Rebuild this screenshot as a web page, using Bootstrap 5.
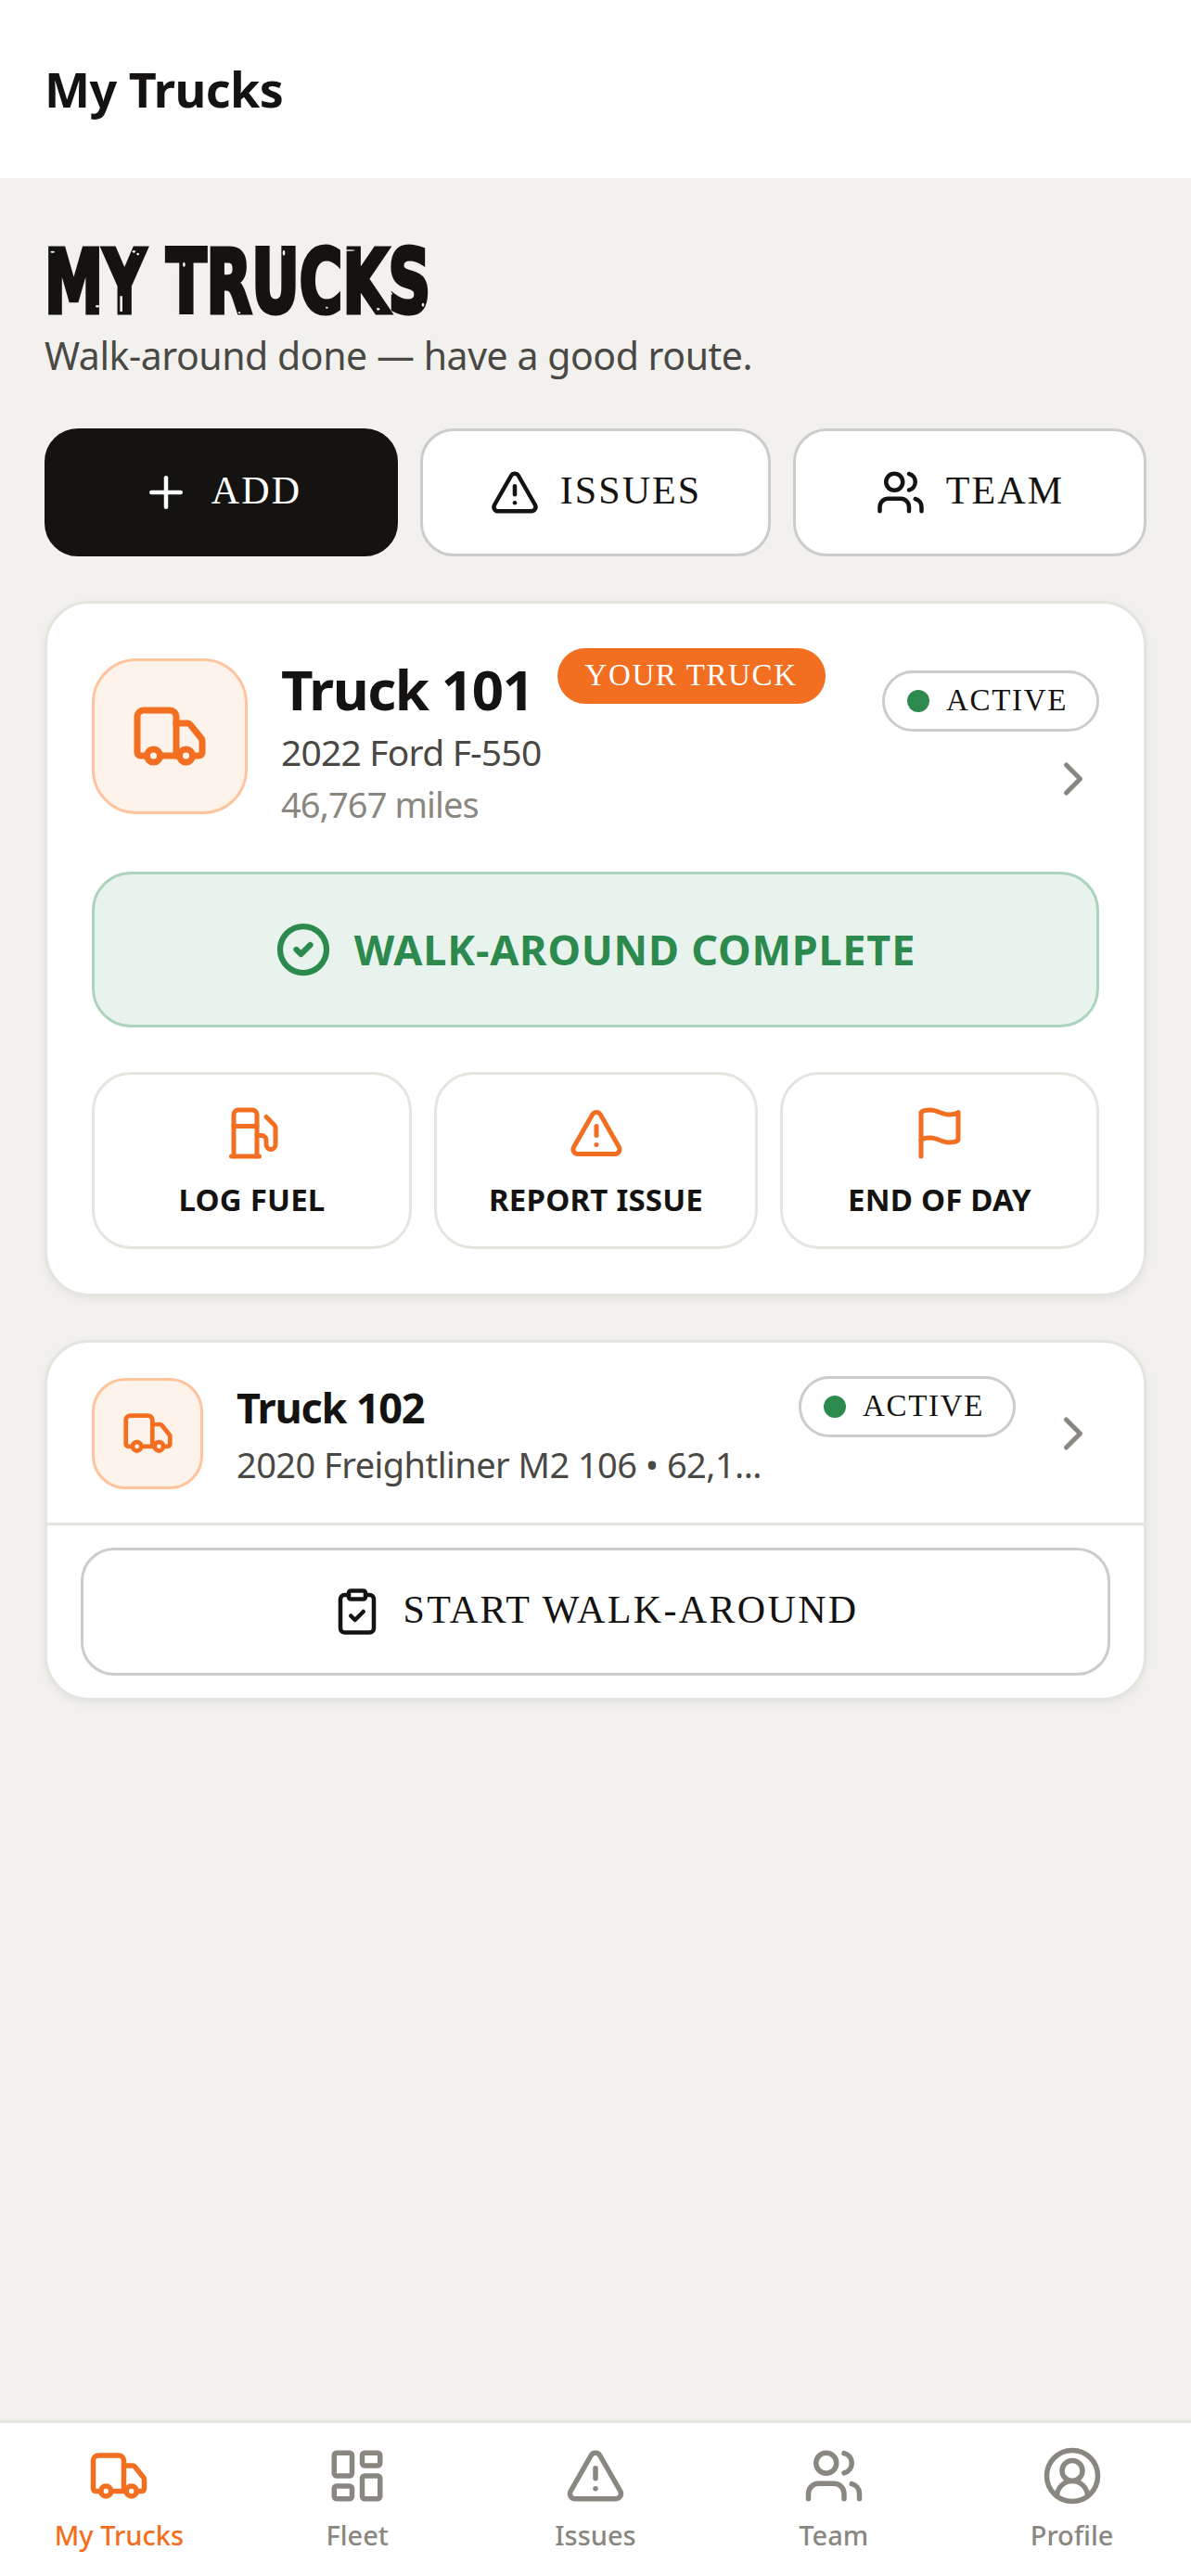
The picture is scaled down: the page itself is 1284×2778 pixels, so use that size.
<!DOCTYPE html>
<html lang="en">
<head>
<meta charset="utf-8">
<title>My Trucks</title>
<link href="https://cdn.jsdelivr.net/npm/bootstrap@5.3.0/dist/css/bootstrap.min.css" rel="stylesheet">
<style>
:root{--ink:#141311;--orange:#f26f21;--line:#e5e5e0;--mid:#cccccc;--green:#2d8a4e;--muted:#8a8780;--soft:#4a4845}
body{font-family:"Noto Sans","Open Sans",sans-serif;background:#f2f1ed;color:var(--ink)}
svg.ico{fill:none;stroke:currentColor;stroke-width:2;stroke-linecap:round;stroke-linejoin:round;flex:none;display:block}
.top-bar{height:192px;padding-left:48px;background:#fff}
.top-title{font-size:52px;font-weight:700;line-height:1;letter-spacing:-.5px}
.page-body{padding:68px 48px 0}
.big-head{position:relative;font-family:"DejaVu Sans",sans-serif;font-weight:700;font-size:94px;line-height:90px;height:94px;margin:0;width:410px}
.big-head-txt{display:inline-block;white-space:nowrap;-webkit-text-stroke:5px var(--ink);transform:scaleX(.675);transform-origin:0 50%}
.specks{position:absolute;left:-18px;top:-10px;fill:#f2f1ed}
.sub-head{font-size:41px;line-height:58px;color:var(--soft);letter-spacing:-.45px;margin:0 0 50px}
.top-actions{display:grid;grid-template-columns:381fr 378fr 381fr;gap:24px;margin-bottom:48px}
.act-btn{height:138px;border-radius:36px;border:3px solid var(--mid);background:#fff;color:var(--ink);font-family:"Liberation Serif",serif;font-size:42px;letter-spacing:2.1px;display:flex;align-items:center;justify-content:center;gap:22px;padding:0 0 3px}
.act-btn svg.ico{margin-top:3px}
.act-btn.dark{background:var(--ink);border-color:var(--ink);color:#fff}
.act-btn:hover{background:#fff;color:var(--ink);border-color:var(--mid)}
.act-btn.dark:hover{background:var(--ink);color:#fff;border-color:var(--ink)}
.truck-card{border:3px solid var(--line);border-radius:48px;box-shadow:0 3px 9px rgba(0,0,0,.06);margin-bottom:47px;overflow:hidden}
.icon-box{background:#fef3eb;border:3px solid #fdc49e;color:var(--orange);display:flex;align-items:center;justify-content:center;flex:none}
.icon-lg{width:168px;height:168px;border-radius:48px;margin-top:3px}
.icon-sm{width:120px;height:120px;border-radius:36px}
.hero-row{gap:36px;height:186px}
.hero-name{font-size:60px;font-weight:700;line-height:76px;letter-spacing:-1.4px;margin-top:6px}
.your-tag{height:60px;border-radius:30px;background:var(--orange);color:#fff;font-family:"Liberation Serif",serif;font-size:33px;letter-spacing:1.6px;padding:0 30px;display:flex;align-items:center;margin-left:26px}
.hero-sub{font-size:39px;line-height:56px;color:var(--soft);letter-spacing:-.8px;margin-top:2px}
.hero-miles{font-size:38px;line-height:58px;height:45px;margin-top:-1px;color:var(--muted);letter-spacing:-.9px}
.state-stack{gap:21px;margin-top:8px}
.state-pill{height:66px;border:3px solid var(--mid);border-radius:33px;background:#fff;padding:0 31px 0 24px;display:flex;align-items:center;gap:18px;font-family:"Liberation Serif",serif;font-size:33px;letter-spacing:1.65px;flex:none}
.state-dot{width:24px;height:24px;border-radius:50%;background:var(--green)}
.chev{color:var(--muted);margin-right:-2px}
.done-box{height:168px;margin-top:55px;border:3px solid #aed3bb;background:#e9f3ed;border-radius:42px;color:var(--green);font-size:45px;font-weight:700;gap:25px;letter-spacing:.8px}
.done-box svg.ico{stroke-width:2.5}
.tool-grid{display:grid;grid-template-columns:345fr 349fr 344fr;gap:24px;margin-top:48px}
.tool-btn{height:191px;border:3px solid var(--line);border-radius:42px;background:#fff;color:var(--ink);font-size:33px;font-weight:700;display:flex;flex-direction:column;align-items:center;gap:17px;padding:33px 0 0;letter-spacing:.2px}
.tool-btn svg{color:var(--orange)}
.tool-btn:hover{background:#fff;color:var(--ink);border-color:var(--line)}
.row-two{padding:36px 48px 35px;gap:36px;border-bottom:3px solid var(--line)}
.two-name{font-size:45px;font-weight:700;line-height:60px;margin-top:4px;letter-spacing:-1.2px}
.two-sub{font-size:38px;line-height:56px;margin-top:3px;color:var(--soft);white-space:nowrap;letter-spacing:-.55px}
.chev-near{margin-left:-4px}
.start-wrap{padding:24px 36px}
.start-btn{width:100%;letter-spacing:2.35px}
.bottom-nav{height:168px;border-top:3px solid var(--line);background:#fff;display:grid;grid-template-columns:repeat(5,1fr)}
.nav-cell{display:flex;flex-direction:column;align-items:center;padding-top:24px;color:var(--muted);font-size:29px;font-weight:500;line-height:42px;text-decoration:none;gap:10px}
.nav-cell.on{color:var(--orange)}
</style>
</head>
<body class="vh-100 d-flex flex-column overflow-hidden">
<svg width="0" height="0" class="position-absolute">
<defs>
<symbol id="i-truck" viewBox="0 0 24 24"><path d="M14 18V6a2 2 0 0 0-2-2H4a2 2 0 0 0-2 2v11a1 1 0 0 0 1 1h2"/><path d="M15 18H9"/><path d="M19 18h2a1 1 0 0 0 1-1v-3.65a1 1 0 0 0-.22-.624l-3.48-4.35A1 1 0 0 0 17.52 8H14"/><circle cx="17" cy="18" r="2"/><circle cx="7" cy="18" r="2"/></symbol>
<symbol id="i-alert" viewBox="0 0 24 24"><path d="m21.73 18-8-14a2 2 0 0 0-3.48 0l-8 14A2 2 0 0 0 4 21h16a2 2 0 0 0 1.73-3"/><path d="M12 9v4"/><path d="M12 17h.01"/></symbol>
<symbol id="i-users" viewBox="0 0 24 24"><path d="M16 21v-2a4 4 0 0 0-4-4H6a4 4 0 0 0-4 4v2"/><circle cx="9" cy="7" r="4"/><path d="M22 21v-2a4 4 0 0 0-3-3.87"/><path d="M16 3.13a4 4 0 0 1 0 7.75"/></symbol>
<symbol id="i-chev" viewBox="0 0 24 24"><path d="m9 18 6-6-6-6"/></symbol>
</defs>
</svg>

<header class="top-bar d-flex align-items-center"><div class="top-title">My Trucks</div></header>

<main class="page-body flex-grow-1">
  <h1 class="big-head"><span class="big-head-txt">MY TRUCKS</span>
    <svg class="specks" width="460" height="100" viewBox="0 0 1380 300" aria-hidden="true">
      <ellipse cx="80" cy="65" rx="7" ry="3"/><ellipse cx="343" cy="64" rx="5" ry="4"/><ellipse cx="356" cy="72" rx="4" ry="4"/><ellipse cx="505" cy="106" rx="4" ry="8"/><ellipse cx="225" cy="241" rx="6" ry="4"/><rect x="471" y="130" width="7" height="122"/><rect x="298" y="208" width="8" height="50"/><ellipse cx="828" cy="68" rx="4" ry="9"/><ellipse cx="652" cy="241" rx="5" ry="4"/><ellipse cx="656" cy="258" rx="6" ry="4"/><ellipse cx="684" cy="262" rx="4" ry="3"/><ellipse cx="957" cy="199" rx="7" ry="5"/><ellipse cx="986" cy="195" rx="4" ry="3"/><ellipse cx="967" cy="245" rx="4" ry="3"/><ellipse cx="1241" cy="108" rx="5" ry="3"/><ellipse cx="1174" cy="200" rx="5" ry="4"/><ellipse cx="1190" cy="198" rx="4" ry="3"/><ellipse cx="1206" cy="206" rx="4" ry="3"/><ellipse cx="1278" cy="236" rx="4" ry="6"/><ellipse cx="1133" cy="250" rx="5" ry="4"/><ellipse cx="1040" cy="60" rx="18" ry="2"/>
    </svg>
  </h1>
  <p class="sub-head">Walk-around done — have a good route.</p>

  <div class="top-actions">
    <button class="btn act-btn dark" type="button"><svg class="ico" width="54" height="54" viewBox="0 0 24 24"><path d="M5 12h14"/><path d="M12 5v14"/></svg>ADD</button>
    <button class="btn act-btn" type="button"><svg class="ico" width="54" height="54"><use href="#i-alert"/></svg>ISSUES</button>
    <button class="btn act-btn" type="button"><svg class="ico" width="54" height="54"><use href="#i-users"/></svg>TEAM</button>
  </div>

  <section class="card truck-card p-5">
    <div class="d-flex align-items-center hero-row">
      <div class="icon-box icon-lg"><svg class="ico" width="84" height="84"><use href="#i-truck"/></svg></div>
      <div class="flex-grow-1 align-self-start">
        <div class="d-flex align-items-start"><span class="hero-name">Truck 101</span><span class="your-tag">YOUR TRUCK</span></div>
        <div class="hero-sub">2022 Ford F-550</div>
        <div class="hero-miles">46,767 miles</div>
      </div>
      <div class="d-flex flex-column align-items-end state-stack">
        <div class="state-pill"><span class="state-dot"></span>ACTIVE</div>
        <svg class="ico chev" width="60" height="60"><use href="#i-chev"/></svg>
      </div>
    </div>
    <div class="done-box d-flex align-items-center justify-content-center">
      <svg class="ico" width="60" height="60" viewBox="0 0 24 24"><circle cx="12" cy="12" r="10"/><path d="m9 12 2 2 4-4"/></svg>WALK-AROUND COMPLETE
    </div>
    <div class="tool-grid">
      <button class="btn tool-btn" type="button"><svg class="ico" width="60" height="60" viewBox="0 0 24 24"><line x1="3" x2="15" y1="22" y2="22"/><line x1="4" x2="14" y1="9" y2="9"/><path d="M14 22V4a2 2 0 0 0-2-2H6a2 2 0 0 0-2 2v18"/><path d="M14 13h2a2 2 0 0 1 2 2v2a2 2 0 0 0 2 2a2 2 0 0 0 2-2V9.83a2 2 0 0 0-.59-1.42L18 5"/></svg>LOG FUEL</button>
      <button class="btn tool-btn" type="button"><svg class="ico" width="60" height="60"><use href="#i-alert"/></svg>REPORT ISSUE</button>
      <button class="btn tool-btn" type="button"><svg class="ico" width="60" height="60" viewBox="0 0 24 24"><path d="M4 15s1-1 4-1 5 2 8 2 4-1 4-1V3s-1 1-4 1-5-2-8-2-4 1-4 1z"/><line x1="4" x2="4" y1="22" y2="15"/></svg>END OF DAY</button>
    </div>
  </section>

  <section class="card truck-card">
    <div class="d-flex align-items-center row-two">
      <div class="icon-box icon-sm"><svg class="ico" width="57" height="57"><use href="#i-truck"/></svg></div>
      <div class="flex-grow-1 align-self-start">
        <div class="two-name">Truck 102</div>
        <div class="two-sub">2020 Freightliner M2 106 • 62,1...</div>
      </div>
      <div class="state-pill align-self-start"><span class="state-dot"></span>ACTIVE</div>
      <svg class="ico chev chev-near" width="60" height="60"><use href="#i-chev"/></svg>
    </div>
    <div class="start-wrap">
      <button class="btn act-btn start-btn" type="button"><svg class="ico" width="54" height="54" viewBox="0 0 24 24"><rect width="8" height="4" x="8" y="2" rx="1" ry="1"/><path d="M16 4h2a2 2 0 0 1 2 2v14a2 2 0 0 1-2 2H6a2 2 0 0 1-2-2V6a2 2 0 0 1 2-2h2"/><path d="m9 14 2 2 4-4"/></svg>START WALK-AROUND</button>
    </div>
  </section>
</main>

<nav class="bottom-nav">
  <a class="nav-cell on" href="#"><svg class="ico" width="66" height="66"><use href="#i-truck"/></svg>My Trucks</a>
  <a class="nav-cell" href="#"><svg class="ico" width="66" height="66" viewBox="0 0 24 24"><rect width="7" height="9" x="3" y="3" rx="1"/><rect width="7" height="5" x="14" y="3" rx="1"/><rect width="7" height="9" x="14" y="12" rx="1"/><rect width="7" height="5" x="3" y="16" rx="1"/></svg>Fleet</a>
  <a class="nav-cell" href="#"><svg class="ico" width="66" height="66"><use href="#i-alert"/></svg>Issues</a>
  <a class="nav-cell" href="#"><svg class="ico" width="66" height="66"><use href="#i-users"/></svg>Team</a>
  <a class="nav-cell" href="#"><svg class="ico" width="66" height="66" viewBox="0 0 24 24"><path d="M18 20a6 6 0 0 0-12 0"/><circle cx="12" cy="10" r="4"/><circle cx="12" cy="12" r="10"/></svg>Profile</a>
</nav>
</body>
</html>
